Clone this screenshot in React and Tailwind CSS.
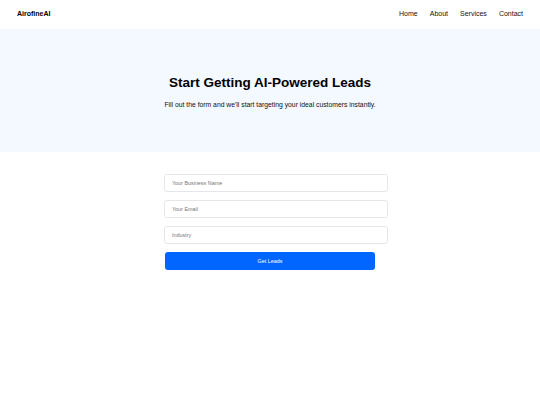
import { useState } from 'react'

// ── Header ───────────────────────────────────────────────────
const LINKS = ['Home', 'About', 'Services', 'Contact']

function Header() {
  return (
    <header className="h-[29px] flex items-center justify-between px-[17px] bg-white">
      <span className="text-[7px] font-bold text-black">AirofineAI</span>
      <nav className="flex items-center gap-[12px]">
        {LINKS.map((l) => (
          <a key={l} href="#" className="text-[7px] text-[#111]">
            {l}
          </a>
        ))}
      </nav>
    </header>
  )
}

// ── Hero ─────────────────────────────────────────────────────
function Hero() {
  return (
    <section className="h-[123px] bg-[#f4f8ff] flex flex-col items-center justify-center pt-[4px]">
      <h1 className="text-[13.5px] font-bold text-black leading-none">
        Start Getting AI-Powered Leads
      </h1>
      <p className="mt-[13px] text-[6.8px] text-[#111] leading-none">
        Fill out the form and we'll start targeting your ideal customers instantly.
      </p>
    </section>
  )
}

// ── Lead form ────────────────────────────────────────────────
function LeadForm() {
  const [form, setForm] = useState({ name: '', email: '', industry: '' })
  const fields = [
    { key: 'name', placeholder: 'Your Business Name', type: 'text' },
    { key: 'email', placeholder: 'Your Email', type: 'email' },
    { key: 'industry', placeholder: 'Industry', type: 'text' },
  ]

  return (
    <form
      onSubmit={(e) => e.preventDefault()}
      className="w-[210px] mx-auto mt-[22px] flex flex-col gap-[8px]"
    >
      {fields.map((f) => (
        <input
          key={f.key}
          type={f.type}
          value={form[f.key]}
          onChange={(e) => setForm({ ...form, [f.key]: e.target.value })}
          placeholder={f.placeholder}
          className="w-[224px] h-[18px] -ml-[1px] px-[7px] rounded-[3px] border border-[#e3e6ea] bg-white text-[5.4px] text-[#333] placeholder:text-[#777] outline-none"
        />
      ))}
      <button
        type="submit"
        className="w-[210px] h-[18px] rounded-[3px] bg-[#0066ff] text-white text-[5.4px] font-medium"
      >
        Get Leads
      </button>
    </form>
  )
}

// ── App ──────────────────────────────────────────────────────
export default function App() {
  return (
    <div className="min-h-[405px] bg-white" style={{ fontFamily: '"Liberation Sans", Arial, sans-serif' }}>
      <Header />
      <Hero />
      <LeadForm />
    </div>
  )
}
